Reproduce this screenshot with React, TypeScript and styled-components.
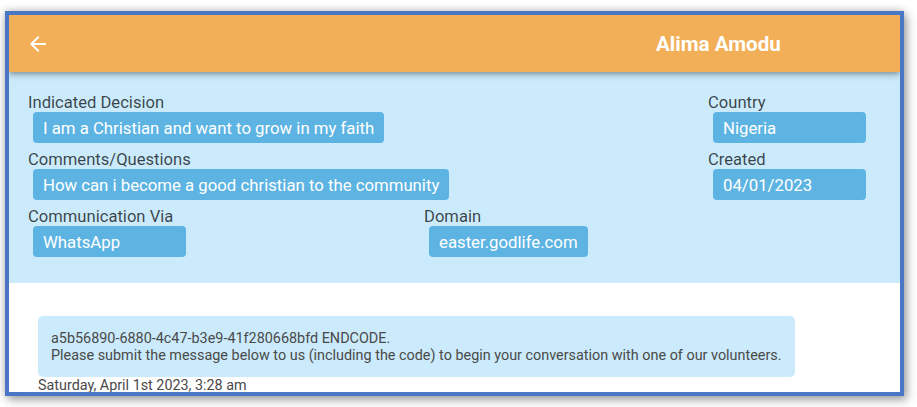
import React from "react";
import styled, { createGlobalStyle } from "styled-components";

const Global = createGlobalStyle`
  html, body { margin: 0; padding: 0; background: #ffffff; }
  body { font-family: Roboto, "Liberation Sans", Arial, sans-serif; }
  * { box-sizing: border-box; }
`;

const Page = styled.div`
  padding: 11px 0 0 5px;
  width: 917px;
  height: 407px;
  overflow: hidden;
`;

const Frame = styled.div`
  width: 899px;
  height: 385px;
  border: 4px solid #4a76c6;
  box-shadow: 3px 4px 9px rgba(60, 60, 60, 0.45), -1px -1px 7px rgba(60, 60, 60, 0.22);
  background: #ffffff;
  overflow: hidden;
  display: flex;
  flex-direction: column;
`;

const Header = styled.header`
  position: relative;
  z-index: 1;
  height: 57px;
  flex: none;
  background: #f2af58;
  display: flex;
  align-items: center;
  padding-left: 17px;
  box-shadow: 0 2px 4px -1px rgba(0, 0, 0, 0.2), 0 4px 5px 0 rgba(0, 0, 0, 0.14),
    0 1px 10px 0 rgba(0, 0, 0, 0.12);
`;

const BackButton = styled.button`
  width: 24px;
  height: 24px;
  padding: 0;
  border: none;
  background: transparent;
  display: flex;
  align-items: center;
  justify-content: center;
  cursor: pointer;
`;

const Title = styled.h1`
  margin: 0 0 0 606px;
  font-size: 20.6px;
  font-weight: 700;
  color: #ffffff;
  letter-spacing: 0;
  line-height: 24px;
`;

const Info = styled.section`
  background: #cbebfc;
  padding: 21px 0 26px 19px;
  display: grid;
  grid-template-columns: 396px 284px 1fr;
  row-gap: 7px;
`;

const Field = styled.div<{ $span?: boolean }>`
  grid-column: ${(p) => (p.$span ? "1 / 3" : "auto")};
  display: flex;
  flex-direction: column;
  align-items: flex-start;
`;

const Label = styled.div`
  font-size: 16.6px;
  line-height: 19px;
  color: rgba(0, 0, 0, 0.72);
`;

const Chip = styled.div`
  margin-left: 5px;
  height: 31px;
  min-width: 153px;
  padding: 0 10px;
  display: inline-flex;
  align-items: center;
  background: #5db4e2;
  border-radius: 4px;
  color: #ffffff;
  font-size: 16.75px;
  white-space: nowrap;
`;

const Messages = styled.section`
  flex: 1;
  padding: 33px 0 0 29px;
  background: #ffffff;
`;

const Bubble = styled.div`
  width: fit-content;
  background: #cbebfc;
  border-radius: 5px;
  padding: 14px 13px 13px;
  font-size: 14.4px;
  line-height: 17px;
  color: #4a4a4a;
`;

const Stamp = styled.div`
  font-size: 14.35px;
  line-height: 17px;
  color: #4a4a4a;
`;

const fields = [
  { label: "Indicated Decision", value: "I am a Christian and want to grow in my faith", span: true },
  { label: "Country", value: "Nigeria" },
  { label: "Comments/Questions", value: "How can i become a good christian to the community", span: true },
  { label: "Created", value: "04/01/2023" },
  { label: "Communication Via", value: "WhatsApp" },
  { label: "Domain", value: "easter.godlife.com" },
];

export default function App() {
  return (
    <>
      <Global />
      <Page>
        <Frame>
          <Header>
            <BackButton aria-label="back">
              <svg width="24" height="24" viewBox="0 0 24 24" fill="#ffffff">
                <path d="M20 11H7.83l5.59-5.59L12 4l-8 8 8 8 1.41-1.41L7.83 13H20v-2z" />
              </svg>
            </BackButton>
            <Title>Alima Amodu</Title>
          </Header>
          <Info>
            {fields.map((f) => (
              <Field key={f.label} $span={f.span}>
                <Label>{f.label}</Label>
                <Chip>{f.value}</Chip>
              </Field>
            ))}
          </Info>
          <Messages>
            <Bubble>
              a5b56890-6880-4c47-b3e9-41f280668bfd ENDCODE.
              <br />
              Please submit the message below to us (including the code) to begin your conversation with one of our volunteers.
            </Bubble>
            <Stamp>Saturday, April 1st 2023, 3:28 am</Stamp>
          </Messages>
        </Frame>
      </Page>
    </>
  );
}
